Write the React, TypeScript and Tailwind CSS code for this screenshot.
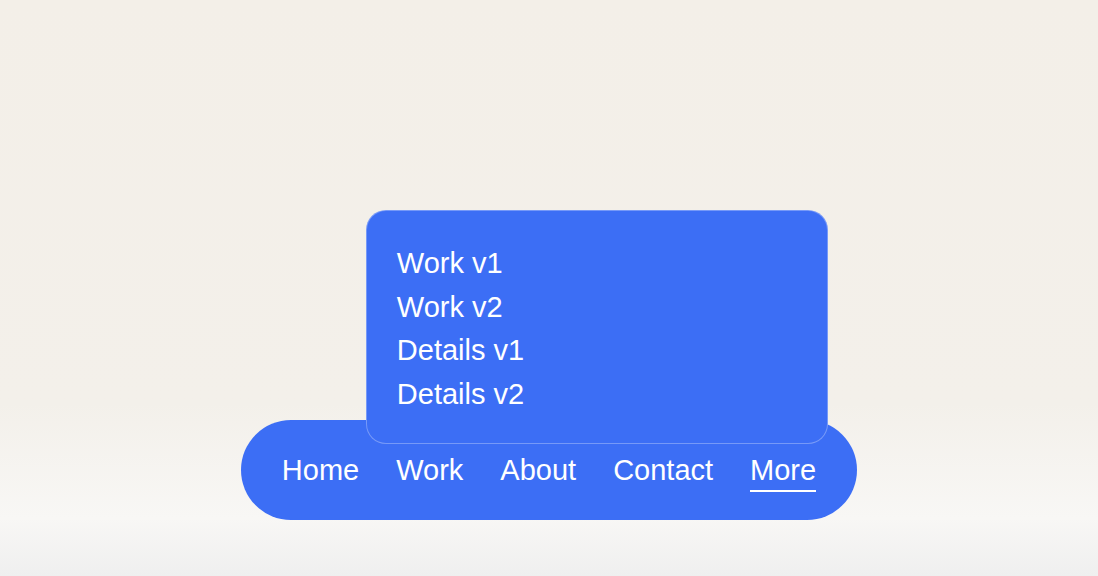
import React from 'react'

const navItems = ['Home', 'Work', 'About', 'Contact', 'More']
const moreItems = ['Work v1', 'Work v2', 'Details v1', 'Details v2']

export default function App() {
  const active = 'More'

  return (
    <div
      className="min-h-screen w-full flex flex-col items-center justify-end pb-[56px] bg-[linear-gradient(180deg,#f3efe8_0%,#f3f0ea_70%,#f8f7f5_90%,#efefef_100%)]"
      style={{ fontFamily: '"Liberation Sans", Arial, sans-serif' }}
    >
      <nav className="relative h-[100px] rounded-full bg-[#3c6ef5] px-[41px] flex items-center gap-[37px] text-white text-[29px] leading-[32px]">
        {/* dropdown for the More item, sits over the bar */}
        <div className="absolute left-[125px] bottom-[76px] w-[462px] rounded-[20px] border border-white/30 bg-[#3c6ef5] px-[30px] pt-[31px] pb-[27px]">
          <ul>
            {moreItems.map((item) => (
              <li key={item} className="leading-[43.5px]">
                <a href="#">{item}</a>
              </li>
            ))}
          </ul>
        </div>

        {navItems.map((item) => (
          <a key={item} href="#" className="relative">
            {item}
            {item === active && (
              <span className="absolute left-0 right-0 -bottom-[6px] h-[2px] bg-white" />
            )}
          </a>
        ))}
      </nav>
    </div>
  )
}
